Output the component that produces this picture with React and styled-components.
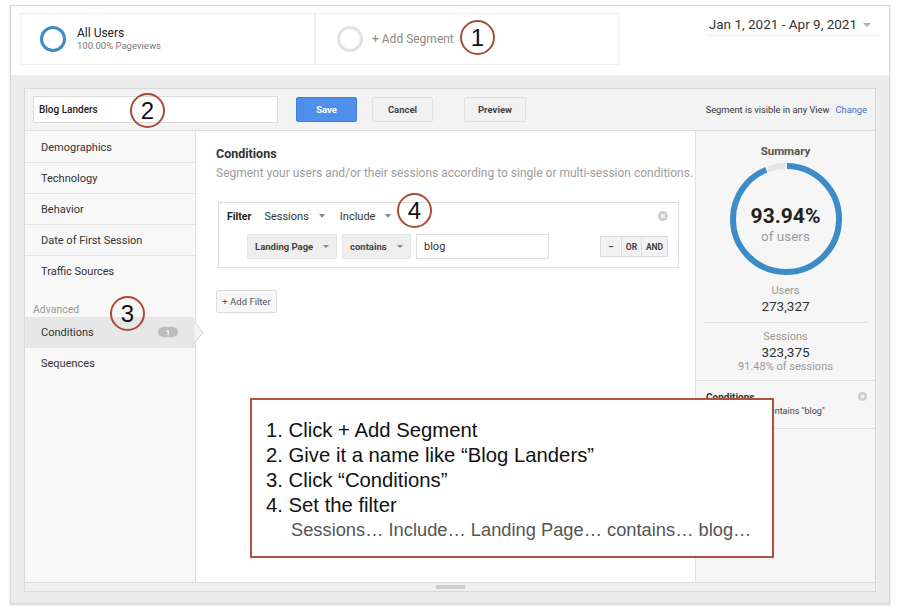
import React from 'react';
import styled, { createGlobalStyle } from 'styled-components';

const Global = createGlobalStyle`
  html, body { margin: 0; padding: 0; background: #fff; overflow: hidden; }
  body { font-family: Roboto, "Liberation Sans", Arial, sans-serif; color: #333; }
  * { box-sizing: border-box; }
`;

const Root = styled.div`
  position: relative;
  width: 900px;
  height: 613px;
  padding: 5px 0 0 10px;
`;

const Frame = styled.div`
  width: 880px;
  height: 599px;
  border: 1px solid #d8d8d8;
  box-shadow: 0 1px 2px rgba(0, 0, 0, 0.18);
  background: #fff;
  display: flex;
  flex-direction: column;
`;

const TopBar = styled.div`
  height: 69px;
  flex: none;
  display: flex;
  align-items: flex-start;
  padding: 7px 9px 0 9px;
`;

const SegmentCard = styled.div`
  width: ${p => p.$w}px;
  height: 52px;
  border: 1px solid #f0f0f0;
  display: flex;
  align-items: center;
  gap: ${p => p.$gap}px;
  padding-left: ${p => p.$pl}px;
`;

const Ring = styled.div`
  width: 26px;
  height: 26px;
  border-radius: 50%;
  border: 3px solid ${p => p.$color};
  flex: none;
`;

const SegText = styled.div`
  display: flex;
  flex-direction: column;
`;

const SegTitle = styled.div`
  font-size: 12px;
  line-height: 14px;
  color: ${p => p.$muted ? '#8a8a8a' : '#222'};
`;

const SegSub = styled.div`
  font-size: 9.5px;
  line-height: 12px;
  color: #777;
`;

const DateBox = styled.div`
  margin-left: auto;
  margin-top: 3px;
  padding: 0 9px 2px 3px;
  border-bottom: 1px solid #ececec;
  display: flex;
  align-items: center;
  gap: 6px;
  font-size: 13.5px;
  line-height: 17px;
  color: #333;
`;

const Caret = styled.span`
  display: inline-block;
  width: 0;
  height: 0;
  border-left: ${p => p.$s || 3.5}px solid transparent;
  border-right: ${p => p.$s || 3.5}px solid transparent;
  border-top: ${p => (p.$s || 3.5) + 0.5}px solid ${p => p.$c || '#888'};
  flex: none;
`;

const GrayArea = styled.div`
  flex: 1;
  background: #ececec;
  padding: 13px 13px 11px 13px;
  display: flex;
`;

const Panel = styled.div`
  flex: 1;
  border: 1px solid #d9d9d9;
  background: #fff;
  display: flex;
  flex-direction: column;
`;

const Header = styled.div`
  height: 42px;
  flex: none;
  display: flex;
  align-items: center;
  padding: 0 8px;
  background: #f3f3f3;
  border-bottom: 1px solid #dedede;
`;

const NameInput = styled.div`
  width: 245px;
  height: 27px;
  background: #fff;
  border: 1px solid #dcdcdc;
  display: flex;
  align-items: center;
  padding-left: 5px;
  font-size: 10px;
  font-weight: 500;
  color: #222;
`;

const HeadButton = styled.div`
  margin-left: ${p => p.$ml}px;
  width: ${p => p.$w}px;
  height: 25px;
  border-radius: 2px;
  display: flex;
  align-items: center;
  justify-content: center;
  font-size: 9.5px;
  font-weight: 700;
  color: ${p => p.$primary ? '#fff' : '#444'};
  background: ${p => p.$primary ? '#4d8fea' : '#f1f1f1'};
  border: 1px solid ${p => p.$primary ? '#3f7fdc' : '#e0e0e0'};
`;

const Visibility = styled.div`
  margin-left: auto;
  font-size: 9.3px;
  color: #333;
  display: flex;
  gap: 6px;
`;

const LinkText = styled.span`
  color: #3b78c2;
`;

const Body = styled.div`
  flex: 1;
  display: grid;
  grid-template-columns: 171px 499px 180px;
  min-height: 0;
`;

const Nav = styled.div`
  background: #f8f8f8;
  border-right: 1px solid #e2e2e2;
  padding-top: 1px;
`;

const NavItem = styled.div`
  position: relative;
  height: 31px;
  display: flex;
  align-items: center;
  padding: 0 17px 0 16px;
  font-size: 11px;
  color: #333;
  background: ${p => p.$active ? '#e7e7e7' : 'transparent'};
  border-bottom: 1px solid ${p => p.$last ? 'transparent' : '#e3e3e3'};
`;

const NavLabel = styled.div`
  margin-top: 16px;
  height: 14px;
  line-height: 14px;
  padding-left: 8px;
  font-size: 10.5px;
  color: #9a9a9a;
`;

const Badge = styled.span`
  margin-left: auto;
  width: 20px;
  height: 10px;
  border-radius: 5px;
  background: #bdbdbd;
  color: #fff;
  font-size: 7.5px;
  font-weight: 700;
  display: flex;
  align-items: center;
  justify-content: center;
`;

const Pointer = styled.svg`
  position: absolute;
  right: -9px;
  top: 5px;
  z-index: 2;
`;

const Main = styled.div`
  padding: 15px 0 0 20px;
  background: #fff;
`;

const Heading = styled.div`
  font-size: 12.5px;
  line-height: 16px;
  font-weight: 700;
  color: #333;
`;

const SubText = styled.div`
  margin-top: 4px;
  font-size: 12px;
  line-height: 15px;
  color: #9d9d9d;
  white-space: nowrap;
`;

const FilterBox = styled.div`
  margin: 21px 0 0 2px;
  width: 461px;
  height: 66px;
  border: 1px solid #dedede;
  padding: 2px 10px 0 8px;
`;

const FilterRow = styled.div`
  height: 22px;
  display: flex;
  align-items: center;
`;

const FilterLabel = styled.span`
  font-size: 10.5px;
  font-weight: 700;
  color: #222;
  margin-right: 13px;
`;

const PlainSelect = styled.span`
  display: flex;
  align-items: center;
  gap: 10px;
  margin-right: 15px;
  font-size: 11px;
  color: #333;
`;

const CloseWrap = styled.span`
  margin-left: auto;
  display: flex;
`;

const RuleRow = styled.div`
  margin-top: 7px;
  height: 25px;
  padding-left: 20px;
  display: flex;
  align-items: center;
  gap: 5px;
`;

const SelectBox = styled.div`
  width: ${p => p.$w}px;
  height: 25px;
  background: #eeeeee;
  border: 1px solid #e4e4e4;
  border-radius: 2px;
  padding: 0 7px;
  display: flex;
  align-items: center;
  justify-content: space-between;
  font-size: 9.5px;
  font-weight: 700;
  color: #444;
`;

const ValueInput = styled.div`
  width: 133px;
  height: 25px;
  border: 1px solid #dedede;
  background: #fff;
  padding-left: 7px;
  display: flex;
  align-items: center;
  font-size: 11px;
  color: #333;
`;

const BtnGroup = styled.div`
  margin-left: auto;
  display: flex;
  height: 21px;
  border: 1px solid #dcdcdc;
  background: #f2f2f2;
`;

const GroupBtn = styled.span`
  width: ${p => p.$w}px;
  display: flex;
  align-items: center;
  justify-content: center;
  font-size: 8.5px;
  font-weight: 700;
  color: #444;
  border-left: ${p => p.$first ? 'none' : '1px solid #dcdcdc'};
`;

const AddFilter = styled.div`
  margin-top: 22px;
  width: 61px;
  height: 23px;
  border: 1px solid #dcdcdc;
  border-radius: 2px;
  background: #f7f7f7;
  display: flex;
  align-items: center;
  justify-content: center;
  font-size: 9.5px;
  color: #555;
`;

const Summary = styled.div`
  background: #f6f6f6;
  border-left: 1px solid #e0e0e0;
  display: flex;
  flex-direction: column;
  text-align: center;
`;

const SummaryTitle = styled.div`
  padding-top: 12px;
  font-size: 11.5px;
  line-height: 16px;
  font-weight: 700;
  color: #555;
`;

const DonutWrap = styled.div`
  position: relative;
  width: 112px;
  height: 112px;
  margin: 4px auto 0;
`;

const DonutCenter = styled.div`
  position: absolute;
  inset: 0;
  display: flex;
  flex-direction: column;
  align-items: center;
  justify-content: center;
  padding-top: 10px;
`;

const BigPct = styled.div`
  font-size: 21px;
  line-height: 24px;
  font-weight: 700;
  color: #222;
`;

const OfUsers = styled.div`
  font-size: 13.5px;
  line-height: 16px;
  color: #9a9a9a;
`;

const Stat = styled.div`
  margin: 0 ${p => p.$inset ? 8 : 0}px;
  padding: ${p => p.$pt}px 0 ${p => p.$pb}px;
  border-bottom: 1px solid #e0e0e0;
`;

const StatLabel = styled.div`
  font-size: 11px;
  line-height: 14px;
  color: #9a9a9a;
`;

const StatValue = styled.div`
  font-size: 13.5px;
  line-height: 16px;
  color: #333;
`;

const CondBlock = styled.div`
  position: relative;
  padding: 10px 8px 10px 10px;
  border-bottom: 1px solid #e0e0e0;
  text-align: left;
`;

const CondTitle = styled.div`
  font-size: 10px;
  line-height: 13px;
  font-weight: 700;
  color: #333;
`;

const CondText = styled.div`
  margin-top: 1px;
  padding-left: 2px;
  font-size: 9px;
  line-height: 13px;
  color: #444;
`;

const CondClose = styled.span`
  position: absolute;
  right: 8px;
  top: 11px;
  display: flex;
`;

const Footer = styled.div`
  height: 9px;
  flex: none;
  border-top: 1px solid #dcdcdc;
  background: #f0f0f0;
  display: flex;
  justify-content: center;
`;

const Handle = styled.div`
  width: 29px;
  height: 4px;
  margin-top: 2px;
  background: #cfcfcf;
`;

const Marker = styled.div`
  position: absolute;
  left: ${p => p.$x}px;
  top: ${p => p.$y}px;
  width: 35px;
  height: 35px;
  border-radius: 50%;
  border: 2.5px solid #a84c36;
  background: transparent;
  display: flex;
  align-items: center;
  justify-content: center;
  font-family: "Liberation Sans", Arial, sans-serif;
  font-size: 24px;
  color: #111;
  z-index: 5;
`;

const Callout = styled.div`
  position: absolute;
  left: 250px;
  top: 398px;
  width: 524px;
  height: 160px;
  border: 2px solid #b3533f;
  background: #fff;
  padding: 18px 0 0 14px;
  font-family: "Liberation Sans", Arial, sans-serif;
  z-index: 4;
`;

const Step = styled.div`
  font-size: 20.3px;
  line-height: 25px;
  color: #111;
  white-space: nowrap;
`;

const StepSub = styled.div`
  padding-left: 25px;
  font-size: 18.3px;
  line-height: 24px;
  color: #555;
  white-space: nowrap;
`;

function CloseIcon({ size = 10 }) {
  return (
    <svg width={size} height={size} viewBox="0 0 10 10">
      <circle cx="5" cy="5" r="5" fill="#cdcdcd" />
      <path d="M3.2 3.2 L6.8 6.8 M6.8 3.2 L3.2 6.8" stroke="#fff" strokeWidth="1.2" />
    </svg>
  );
}

function Donut() {
  const r = 53;
  const c = 2 * Math.PI * r;
  const arc = (s, e, color) => (
    <circle
      cx="56"
      cy="56"
      r={r}
      fill="none"
      stroke={color}
      strokeWidth="6"
      strokeDasharray={`${((e - s) / 360) * c} ${c}`}
      transform={`rotate(${s - 90} 56 56)`}
    />
  );
  return (
    <svg width="112" height="112" viewBox="0 0 112 112">
      {arc(1, 337.5, '#3b8cc9')}
      {arc(340, 359.2, '#e4e4e4')}
    </svg>
  );
}

const navTop = ['Demographics', 'Technology', 'Behavior', 'Date of First Session', 'Traffic Sources'];

export default function App() {
  return (
    <Root>
      <Global />
      <Frame>
        <TopBar>
          <SegmentCard $w={295} $pl={19} $gap={11}>
            <Ring $color="#3f8cc4" />
            <SegText>
              <SegTitle>All Users</SegTitle>
              <SegSub>100.00% Pageviews</SegSub>
            </SegText>
          </SegmentCard>
          <SegmentCard $w={304} $pl={21} $gap={9}>
            <Ring $color="#e2e2e2" />
            <SegTitle $muted>+ Add Segment</SegTitle>
          </SegmentCard>
          <DateBox>
            Jan 1, 2021 - Apr 9, 2021
            <Caret $s={4} $c="#b0b0b0" />
          </DateBox>
        </TopBar>
        <GrayArea>
          <Panel>
            <Header>
              <NameInput>Blog Landers</NameInput>
              <HeadButton $primary $ml={18} $w={61}>Save</HeadButton>
              <HeadButton $ml={15} $w={61}>Cancel</HeadButton>
              <HeadButton $ml={31} $w={62}>Preview</HeadButton>
              <Visibility>
                <span>Segment is visible in any View</span>
                <LinkText>Change</LinkText>
              </Visibility>
            </Header>
            <Body>
              <Nav>
                {navTop.map((t, i) => (
                  <NavItem key={t} $last={i === navTop.length - 1}>{t}</NavItem>
                ))}
                <NavLabel>Advanced</NavLabel>
                <NavItem $active>
                  Conditions
                  <Badge>1</Badge>
                  <Pointer width="10" height="21" viewBox="0 0 10 21">
                    <path d="M0.5 0 L9 10.5 L0.5 21" fill="#f4f4f4" stroke="#d2d2d2" strokeWidth="1" />
                  </Pointer>
                </NavItem>
                <NavItem $last>Sequences</NavItem>
              </Nav>
              <Main>
                <Heading>Conditions</Heading>
                <SubText>Segment your users and/or their sessions according to single or multi-session conditions.</SubText>
                <FilterBox>
                  <FilterRow>
                    <FilterLabel>Filter</FilterLabel>
                    <PlainSelect>Sessions<Caret /></PlainSelect>
                    <PlainSelect>Include<Caret /></PlainSelect>
                    <CloseWrap><CloseIcon /></CloseWrap>
                  </FilterRow>
                  <RuleRow>
                    <SelectBox $w={90}>Landing Page<Caret $s={3} /></SelectBox>
                    <SelectBox $w={69}>contains<Caret $s={3} /></SelectBox>
                    <ValueInput>blog</ValueInput>
                    <BtnGroup>
                      <GroupBtn $first $w={20}>–</GroupBtn>
                      <GroupBtn $w={20}>OR</GroupBtn>
                      <GroupBtn $w={26}>AND</GroupBtn>
                    </BtnGroup>
                  </RuleRow>
                </FilterBox>
                <AddFilter>+ Add Filter</AddFilter>
              </Main>
              <Summary>
                <SummaryTitle>Summary</SummaryTitle>
                <DonutWrap>
                  <Donut />
                  <DonutCenter>
                    <BigPct>93.94%</BigPct>
                    <OfUsers>of users</OfUsers>
                  </DonutCenter>
                </DonutWrap>
                <Stat $inset $pt={9} $pb={8}>
                  <StatLabel>Users</StatLabel>
                  <StatValue>273,327</StatValue>
                </Stat>
                <Stat $pt={7} $pb={6}>
                  <StatLabel>Sessions</StatLabel>
                  <StatValue>323,375</StatValue>
                  <StatLabel>91.48% of sessions</StatLabel>
                </Stat>
                <CondBlock>
                  <CondTitle>Conditions</CondTitle>
                  <CondText>Landing Page contains "blog"</CondText>
                  <CondClose><CloseIcon size={9} /></CondClose>
                </CondBlock>
              </Summary>
            </Body>
            <Footer><Handle /></Footer>
          </Panel>
        </GrayArea>
      </Frame>

      <Marker $x={460} $y={20}>1</Marker>
      <Marker $x={130} $y={93}>2</Marker>
      <Marker $x={110} $y={296}>3</Marker>
      <Marker $x={397} $y={193}>4</Marker>

      <Callout>
        <Step>1. Click + Add Segment</Step>
        <Step>2. Give it a name like “Blog Landers”</Step>
        <Step>3. Click “Conditions”</Step>
        <Step>4. Set the filter</Step>
        <StepSub>Sessions… Include… Landing Page… contains… blog…</StepSub>
      </Callout>
    </Root>
  );
}
